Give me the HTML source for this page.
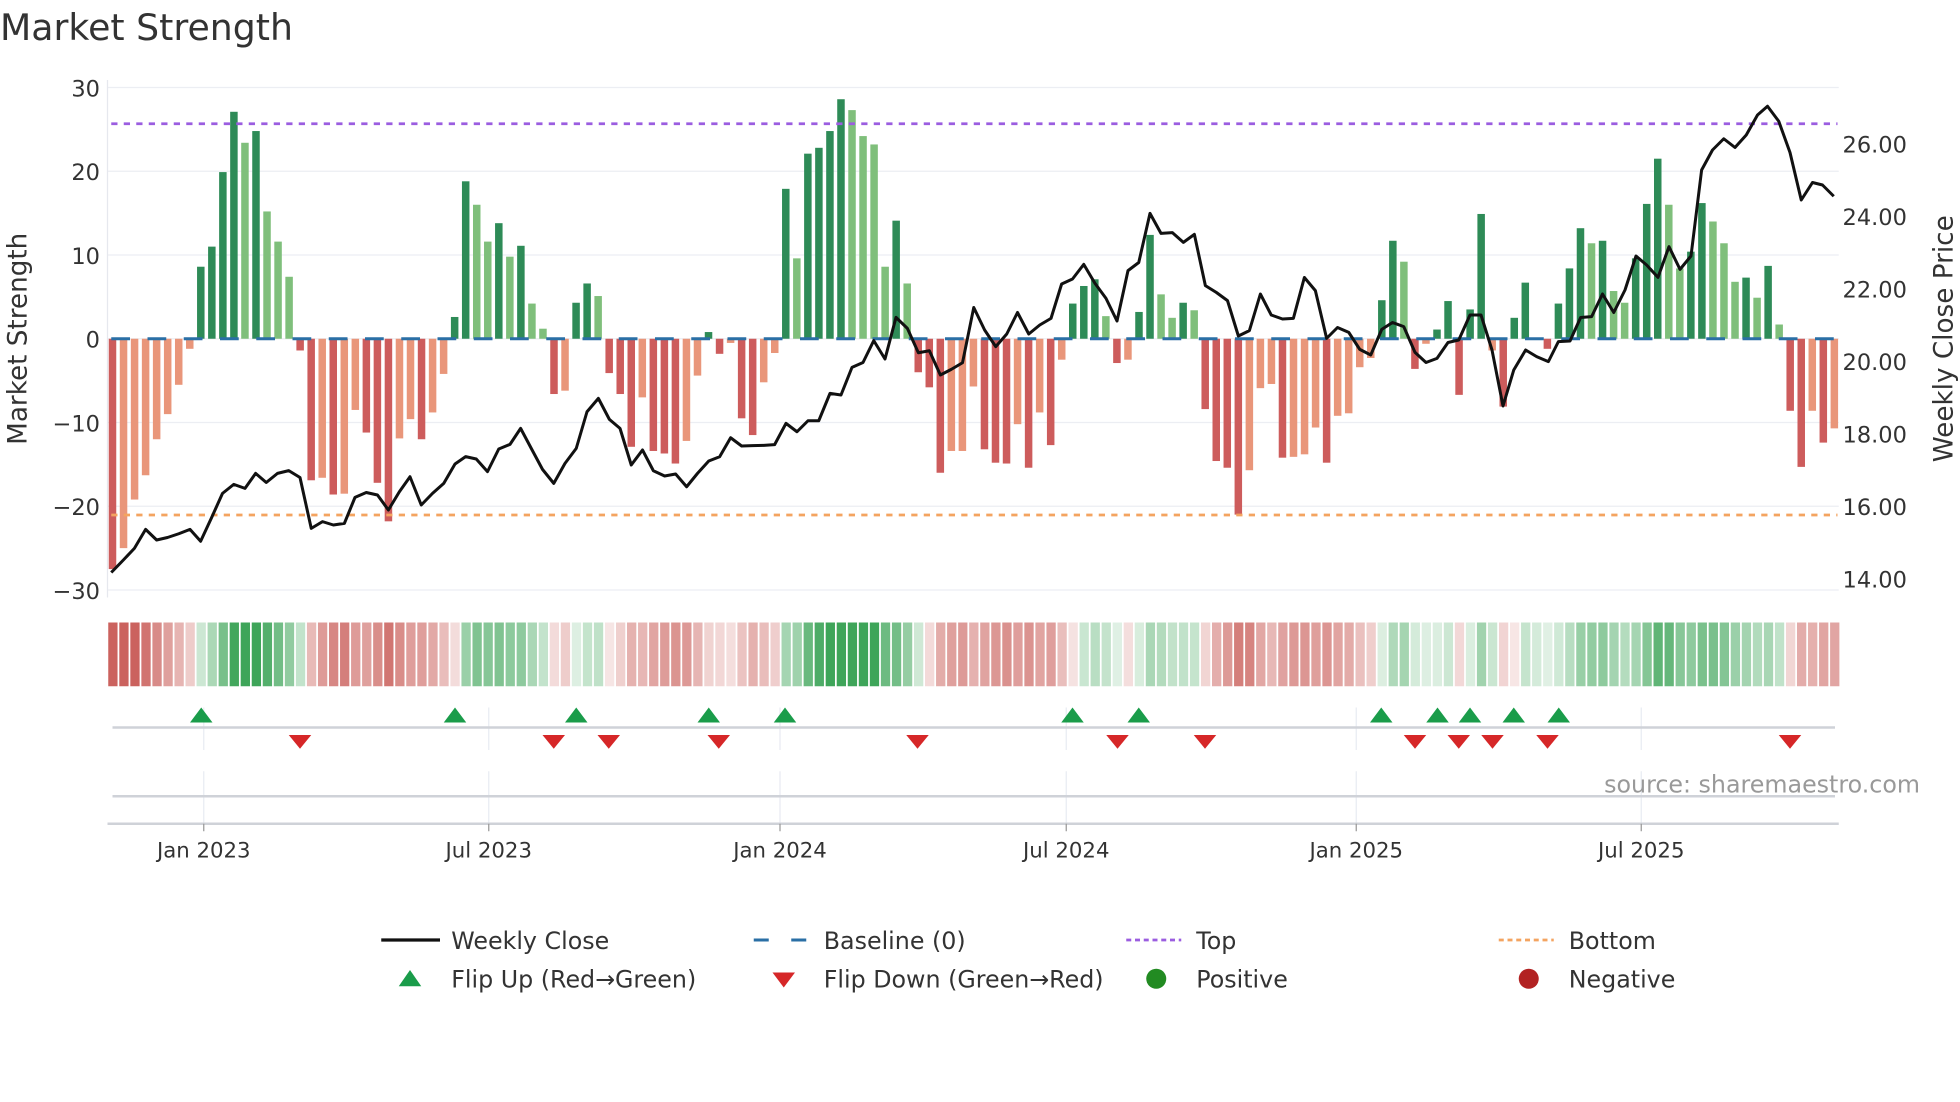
<!DOCTYPE html>
<html><head><meta charset="utf-8">
<style>
html,body{margin:0;padding:0;background:#fff;}
svg{display:block;}
text{font-family:"DejaVu Sans","Liberation Sans",sans-serif;fill:#333;}
</style></head>
<body>
<svg id="s" xmlns="http://www.w3.org/2000/svg" width="1960" height="1102" viewBox="0 0 1568 881.6">
<rect width="1568" height="882" fill="#fff"/>
<text x="0" y="32" font-size="29" fill="#333">Market Strength</text>
<g id="grid"></g>
<line x1="86" y1="64" x2="86" y2="478" stroke="#e6e8ee" stroke-width="1"/>
<g id="bars"></g>
<line x1="89" y1="99" x2="1470" y2="99" stroke="#9b5de0" stroke-width="2.2" stroke-dasharray="5 5"/>
<line x1="89" y1="412" x2="1470" y2="412" stroke="#f4a460" stroke-width="2.2" stroke-dasharray="5 5"/>
<line x1="89" y1="271" x2="1470" y2="271" stroke="#2a6fa5" stroke-width="2.4" stroke-dasharray="15 14"/>
<polyline id="price" fill="none" stroke="#111" stroke-width="2.4" stroke-linejoin="round"/>
<g id="yl" font-size="18" text-anchor="end">
<text x="80" y="77">30</text><text x="80" y="144">20</text><text x="80" y="211">10</text><text x="80" y="278">0</text>
<text x="80" y="345">−10</text><text x="80" y="412">−20</text><text x="80" y="479">−30</text></g>
<g font-size="18">
<text x="1474" y="122">26.00</text><text x="1474" y="180">24.00</text><text x="1474" y="238">22.00</text><text x="1474" y="296">20.00</text>
<text x="1474" y="354">18.00</text><text x="1474" y="412">16.00</text><text x="1474" y="470">14.00</text></g>
<text transform="translate(21,271) rotate(-90)" font-size="21" text-anchor="middle">Market Strength</text>
<text transform="translate(1562,271) rotate(-90)" font-size="21" text-anchor="middle">Weekly Close Price</text>
<g id="strip"></g>
<g id="vg" stroke="#e8ebf2" stroke-width="1"></g>
<line x1="90" y1="582" x2="1468" y2="582" stroke="#cfd2d8" stroke-width="2"/>
<line x1="90" y1="637" x2="1468" y2="637" stroke="#cfd2d8" stroke-width="2"/>
<line x1="86" y1="659" x2="1471" y2="659" stroke="#cfd2d8" stroke-width="2"/>
<g id="marks"></g>
<g id="ticks" font-size="17" text-anchor="middle"></g>
<text x="1536" y="634" font-size="19" text-anchor="end" style="fill:#999">source: sharemaestro.com</text>
<g font-size="19">
<line x1="305" y1="752" x2="352" y2="752" stroke="#111" stroke-width="2.6"/>
<text x="361" y="759">Weekly Close</text>
<line x1="603" y1="752" x2="647" y2="752" stroke="#2a6fa5" stroke-width="2.4" stroke-dasharray="12 18"/>
<text x="659" y="759">Baseline (0)</text>
<line x1="901" y1="752" x2="945" y2="752" stroke="#9b5de0" stroke-width="2.2" stroke-dasharray="4 3"/>
<text x="957" y="759">Top</text>
<line x1="1199" y1="752" x2="1243" y2="752" stroke="#f4a460" stroke-width="2.2" stroke-dasharray="4 3"/>
<text x="1255" y="759">Bottom</text>
<polygon points="319,789 337,789 328,776" fill="#1a9c4a"/>
<text x="361" y="790">Flip Up (Red→Green)</text>
<polygon points="618,778 636,778 627,790" fill="#d62728"/>
<text x="659" y="790">Flip Down (Green→Red)</text>
<circle cx="925" cy="783" r="8" fill="#228b22"/>
<text x="957" y="790">Positive</text>
<circle cx="1223" cy="783" r="8" fill="#b22222"/>
<text x="1255" y="790">Negative</text>
</g>
</svg>
<script>
var NS="http://www.w3.org/2000/svg";
function el(p,t,a){var e=document.createElementNS(NS,t);for(var k in a)e.setAttribute(k,a[k]);p.appendChild(e);return e;}
var S="-27.5R,-25S,-19.2S,-16.3S,-12S,-9S,-5.5S,-1.2S,8.6D,11D,19.9D,27.1D,23.4L,24.8D,15.2L,11.6L,7.4L,-1.4R,-16.9R,-16.6S,-18.6R,-18.5S,-8.5S,-11.2R,-17.2R,-21.8R,-11.9S,-9.6S,-12R,-8.8S,-4.2S,2.6D,18.8D,16L,11.6L,13.8D,9.8L,11.1D,4.2L,1.2L,-6.6R,-6.2S,4.3D,6.6D,5.1L,-4.1R,-6.6R,-12.9R,-7S,-13.4R,-13.7R,-14.9R,-12.2S,-4.4S,0.8D,-1.8R,-0.5S,-9.5R,-11.5R,-5.2S,-1.7S,17.9D,9.6L,22.1D,22.8D,24.8D,28.6D,27.3L,24.2L,23.2L,8.6L,14.1D,6.6L,-4R,-5.8R,-16R,-13.4S,-13.4S,-5.7S,-13.2R,-14.8R,-14.9R,-10.2S,-15.4R,-8.8S,-12.7R,-2.5S,4.2D,6.3D,7.1D,2.7L,-2.9R,-2.5S,3.2D,12.4D,5.3L,2.5L,4.3D,3.4L,-8.4R,-14.6R,-15.4R,-21R,-15.7S,-5.9S,-5.4S,-14.2R,-14.1S,-13.8S,-10.6S,-14.8R,-9.2S,-8.9S,-3.4S,-2.3S,4.6D,11.7D,9.2L,-3.6R,-0.6S,1.1D,4.5D,-6.7R,3.5D,14.9D,-1.4S,-8.1R,2.5D,6.7D,0D,-1.2R,4.2D,8.4D,13.2D,11.4L,11.7D,5.7L,4.3L,9.6D,16.1D,21.5D,16L,8.4L,10.4D,16.2D,14L,11.4L,6.8L,7.3D,4.9L,8.7D,1.7L,-8.6R,-15.3R,-8.6S,-12.4R,-10.7S".split(",");
var C={D:"#2e8b57",L:"#7fbf7b",R:"#cd5c5c",S:"#e9967a"};
var bars=document.getElementById("bars"),dx=8.83,x0=90;
var g=document.getElementById("grid");
[70,137,204,271,338,405,472].forEach(function(y){el(g,"line",{x1:86,y1:y,x2:1471,y2:y,stroke:"#eceef3","stroke-width":1});});
var vals=[];
S.forEach(function(s,i){var v=parseFloat(s),t=s.slice(-1);vals.push(v);var x=x0+i*dx;
 if(v===0)return;var y0=271,y1=271-v*6.7;
 el(bars,"rect",{x:x-3,y:Math.min(y0,y1),width:6,height:Math.abs(y1-y0),fill:C[t]});});
var st=document.getElementById("strip"),e=vals[0];
function mix(a,b,f){return "rgb("+[0,1,2].map(function(k){return Math.round(a[k]+(b[k]-a[k])*f);}).join(",")+")";}
vals.forEach(function(v,i){e=e*0.45+v*0.55;var f=Math.min(Math.abs(e)/22,1)*0.8+0.15;
 var c=e>=0?mix([255,255,255],[52,160,80],f):mix([255,255,255],[200,90,85],f);
 el(st,"rect",{x:86+i*dx+0.6,y:498,width:dx-1.4,height:51,fill:c});});
var P=[[89,458],[98.7,448],[107.5,438.7],[116.5,423.5],[125.3,432],[134,430],[143,427],[152,423.5],[160.5,433],[169,414.7],[178,394.7],[187,387.5],[196,390.7],[204.5,378.7],[213,386],[222,378.7],[231,376.5],[240,382],[249,422.7],[258,417.3],[266.7,420],[275.5,418.7],[284,397.9],[293,394],[302,396],[310.7,408],[319.5,393.4],[328,381.4],[337,404],[346,394.7],[355,386.7],[364,371.2],[372.5,365.3],[381,367.2],[390,377.3],[399,359.2],[408,355.5],[416.5,342.7],[425,358.7],[434,375.5],[443,386.7],[452,370.7],[461,358.7],[469.6,329.4],[478.7,318.7],[487.5,335.5],[496,342.7],[505,372],[514,360],[522.7,376.6],[531.7,380.8],[540.5,379.2],[549.3,389.4],[558,378.7],[567,368.8],[575.7,365.4],[584.5,350.2],[593.3,356.8],[602,356.5],[611,356.3],[619.7,355.7],[628.8,338.7],[637.6,345.4],[646.4,336.6],[655,336.6],[664,314.7],[672.8,316],[681.6,293.9],[690.4,290],[699,272.5],[708,287.2],[716.8,253.9],[725.9,262.7],[734.7,282.2],[743.5,280.6],[752.3,300],[761,295.5],[770,290.2],[779,246],[787.7,264],[796.6,277.3],[805.4,267.2],[814,250],[823,267.2],[831.8,260],[840.8,254.7],[849.3,227.2],[858,223.2],[867,211.5],[876,226.7],[884.8,238.7],[893.6,256.8],[902.4,216.5],[911,210],[920,170.7],[928.8,186.7],[937.9,186.1],[946.7,193.9],[955.5,187.5],[964.3,228.5],[973,233.9],[982,240.5],[990.7,268.8],[999.5,264.5],[1008.3,235.2],[1017,252],[1026,255.2],[1034.7,254.7],[1043.5,222],[1052.3,232.5],[1061.3,270.7],[1070,262],[1079,265.9],[1087.8,279.5],[1096.6,284],[1105.4,263.5],[1114,258],[1123,261.3],[1132,281.9],[1140.8,290],[1149.6,286.7],[1158.4,274],[1167,272],[1176,252],[1184.8,252],[1193.6,280],[1202.4,324.8],[1211,296],[1220.5,280],[1229.3,285.3],[1238.7,289.3],[1246.7,273.3],[1256,272.8],[1264.5,254],[1273.3,253.3],[1282,235.2],[1291,250],[1300,232],[1308.8,204.8],[1317.3,212],[1326.4,221.9],[1335.2,197.3],[1344,215.5],[1352.8,204.8],[1361.3,136],[1370,120],[1379,111],[1388,118],[1397,108],[1406,92],[1414,85],[1423,97],[1432,122],[1441,160],[1450,146],[1458,148],[1467,157]];
document.getElementById("price").setAttribute("points",P.map(function(p){return p.join(",");}).join(" "));
var vg=document.getElementById("vg"),tk=document.getElementById("ticks");
[[163,"Jan 2023"],[391,"Jul 2023"],[624,"Jan 2024"],[853,"Jul 2024"],[1085,"Jan 2025"],[1313,"Jul 2025"]].forEach(function(d){
 el(vg,"line",{x1:d[0],y1:566,x2:d[0],y2:600});el(vg,"line",{x1:d[0],y1:617,x2:d[0],y2:659});
 el(tk,"line",{x1:d[0],y1:659,x2:d[0],y2:665,stroke:"#999","stroke-width":1});
 var t=el(tk,"text",{x:d[0],y:686});t.textContent=d[1];});
var mk=document.getElementById("marks");
[161,364,461,567,628,858,911,1105,1150,1176,1211,1247].forEach(function(x){el(mk,"polygon",{points:(x-9)+",578 "+(x+9)+",578 "+x+",566",fill:"#1a9c4a"});});
[240,443,487,575,734,894,964,1132,1167,1194,1238,1432].forEach(function(x){el(mk,"polygon",{points:(x-9)+",588 "+(x+9)+",588 "+x+",599",fill:"#d62728"});});
</script>
</body></html>
